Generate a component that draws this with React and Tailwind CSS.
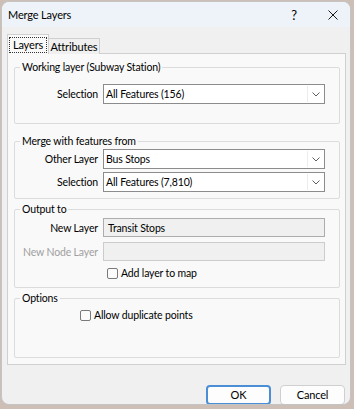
import React from "react";

const FONT = { fontFamily: 'Lato, "Noto Sans", Arial, sans-serif' };

function Chevron() {
  return (
    <svg width="8" height="5" viewBox="0 0 8 5" className="text-[#606060]">
      <path d="M0.5 0.5 L4 4 L7.5 0.5" fill="none" stroke="currentColor" strokeWidth="1" />
    </svg>
  );
}

function Combo({ value }) {
  return (
    <div className="w-[222px] h-[20px] border border-[#8c8c8c] bg-white flex items-center">
      <span className="flex-1 pl-[2px] leading-[14px] whitespace-nowrap overflow-hidden">{value}</span>
      <div className="w-px h-[16px] bg-[#ececec]" />
      <div className="w-[16px] flex justify-center items-center">
        <Chevron />
      </div>
    </div>
  );
}

function Row({ label, disabled, children, className = "" }) {
  return (
    <div className={`flex items-center ${className}`}>
      <span className={`w-[83px] text-right leading-[14px] whitespace-nowrap ${disabled ? "text-[#a0a0a0]" : "text-black"}`}>{label}</span>
      <div className="ml-[5px]">{children}</div>
    </div>
  );
}

function Group({ title, className = "", children }) {
  return (
    <fieldset className={`border border-[#dcdcdc] rounded-[2px] ${className}`}>
      <legend className="ml-[5px] px-[2px] leading-[14px] whitespace-nowrap">{title}</legend>
      {children}
    </fieldset>
  );
}

function Check({ label }) {
  return (
    <div className="flex items-center h-[14px]">
      <span className="w-[11px] h-[11px] border border-[#7a7a7a] rounded-[2px] bg-[#fbfbfb]" />
      <span className="ml-[3px] leading-[14px] whitespace-nowrap">{label}</span>
    </div>
  );
}

export default function App() {
  return (
    <div className="w-[354px] h-[409px] bg-[#cdbfb6] pt-px pl-px overflow-hidden text-[10.5px] tracking-[-0.15px] text-black" style={FONT}>
      <div className="w-[350px] h-[404px] rounded-[8px] bg-[#f0f0f0] border border-[#c4c4c4] overflow-hidden flex flex-col">
        {/* title bar */}
        <div className="h-[25px] bg-[#eef3f9] flex items-center pl-[6px] shrink-0">
          <span className="text-[11px] leading-[14px]">Merge Layers</span>
          <span className="ml-auto text-[13px] leading-[14px]">?</span>
          <svg width="10" height="10" viewBox="0 0 10 10" className="ml-[31px] mr-[12px]">
            <path d="M0.5 0.5 L9.5 9.5 M9.5 0.5 L0.5 9.5" stroke="#1a1a1a" strokeWidth="1" />
          </svg>
        </div>

        <div className="px-[5px] pt-[7px] flex flex-col">
          {/* tabs */}
          <div className="flex items-end -mb-px relative">
            <div className="w-[42px] h-[20px] border border-b-0 border-[#d0d0d0] bg-[#f9f9f9] flex items-center justify-center">
              <span className="border border-dotted border-[#333] px-[3px] leading-[14px] text-[11px]">Layers</span>
            </div>
            <div className="w-[51px] h-[16px] border border-l-0 border-b-0 border-[#d0d0d0] bg-[#f0f0f0] flex items-center justify-center">
              <span className="leading-[14px] text-[11px]">Attributes</span>
            </div>
          </div>

          {/* panel */}
          <div className="w-[339px] border border-[#d0d0d0] bg-[#f9f9f9] pl-[6px] pr-[5px] pt-[6px] pb-[6px] flex flex-col">
            <Group title="Working layer (Subway Station)">
              <Row label="Selection" className="mt-[10px] mb-[19px]">
                <Combo value="All Features (156)" />
              </Row>
            </Group>

            <Group title="Merge with features from" className="mt-[10px]">
              <Row label="Other Layer" className="mt-px">
                <Combo value="Bus Stops" />
              </Row>
              <Row label="Selection" className="mt-[3px] mb-[6px]">
                <Combo value="All Features (7,810)" />
              </Row>
            </Group>

            <Group title="Output to" className="mt-[3px]">
              <Row label="New Layer" className="mt-[2px]">
                <div className="w-[222px] h-[19px] border border-[#adadad] bg-[#f0f0f0] flex items-center pl-[4px] leading-[14px]">
                  Transit Stops
                </div>
              </Row>
              <Row label="New Node Layer" disabled className="mt-[5px]">
                <div className="w-[222px] h-[19px] border border-[#cccccc] bg-[#f0f0f0]" />
              </Row>
              <div className="ml-[92px] mt-[5px] mb-[7px]">
                <Check label="Add layer to map" />
              </div>
            </Group>

            <Group title="Options" className="mt-[3px]">
              <div className="ml-[65px] mt-[3px] mb-[35px]">
                <Check label="Allow duplicate points" />
              </div>
            </Group>
          </div>

          {/* buttons */}
          <div className="flex justify-end gap-[9px] mt-[20px]">
            <button className="w-[65px] h-[20px] rounded-[4px] border-2 border-[#4a8fd6] bg-[#fdfdfd] leading-[14px] text-[11px]">OK</button>
            <button className="w-[65px] h-[20px] rounded-[4px] border border-[#cfcfcf] bg-[#fdfdfd] leading-[14px] text-[11px]">Cancel</button>
          </div>
        </div>
      </div>
    </div>
  );
}
